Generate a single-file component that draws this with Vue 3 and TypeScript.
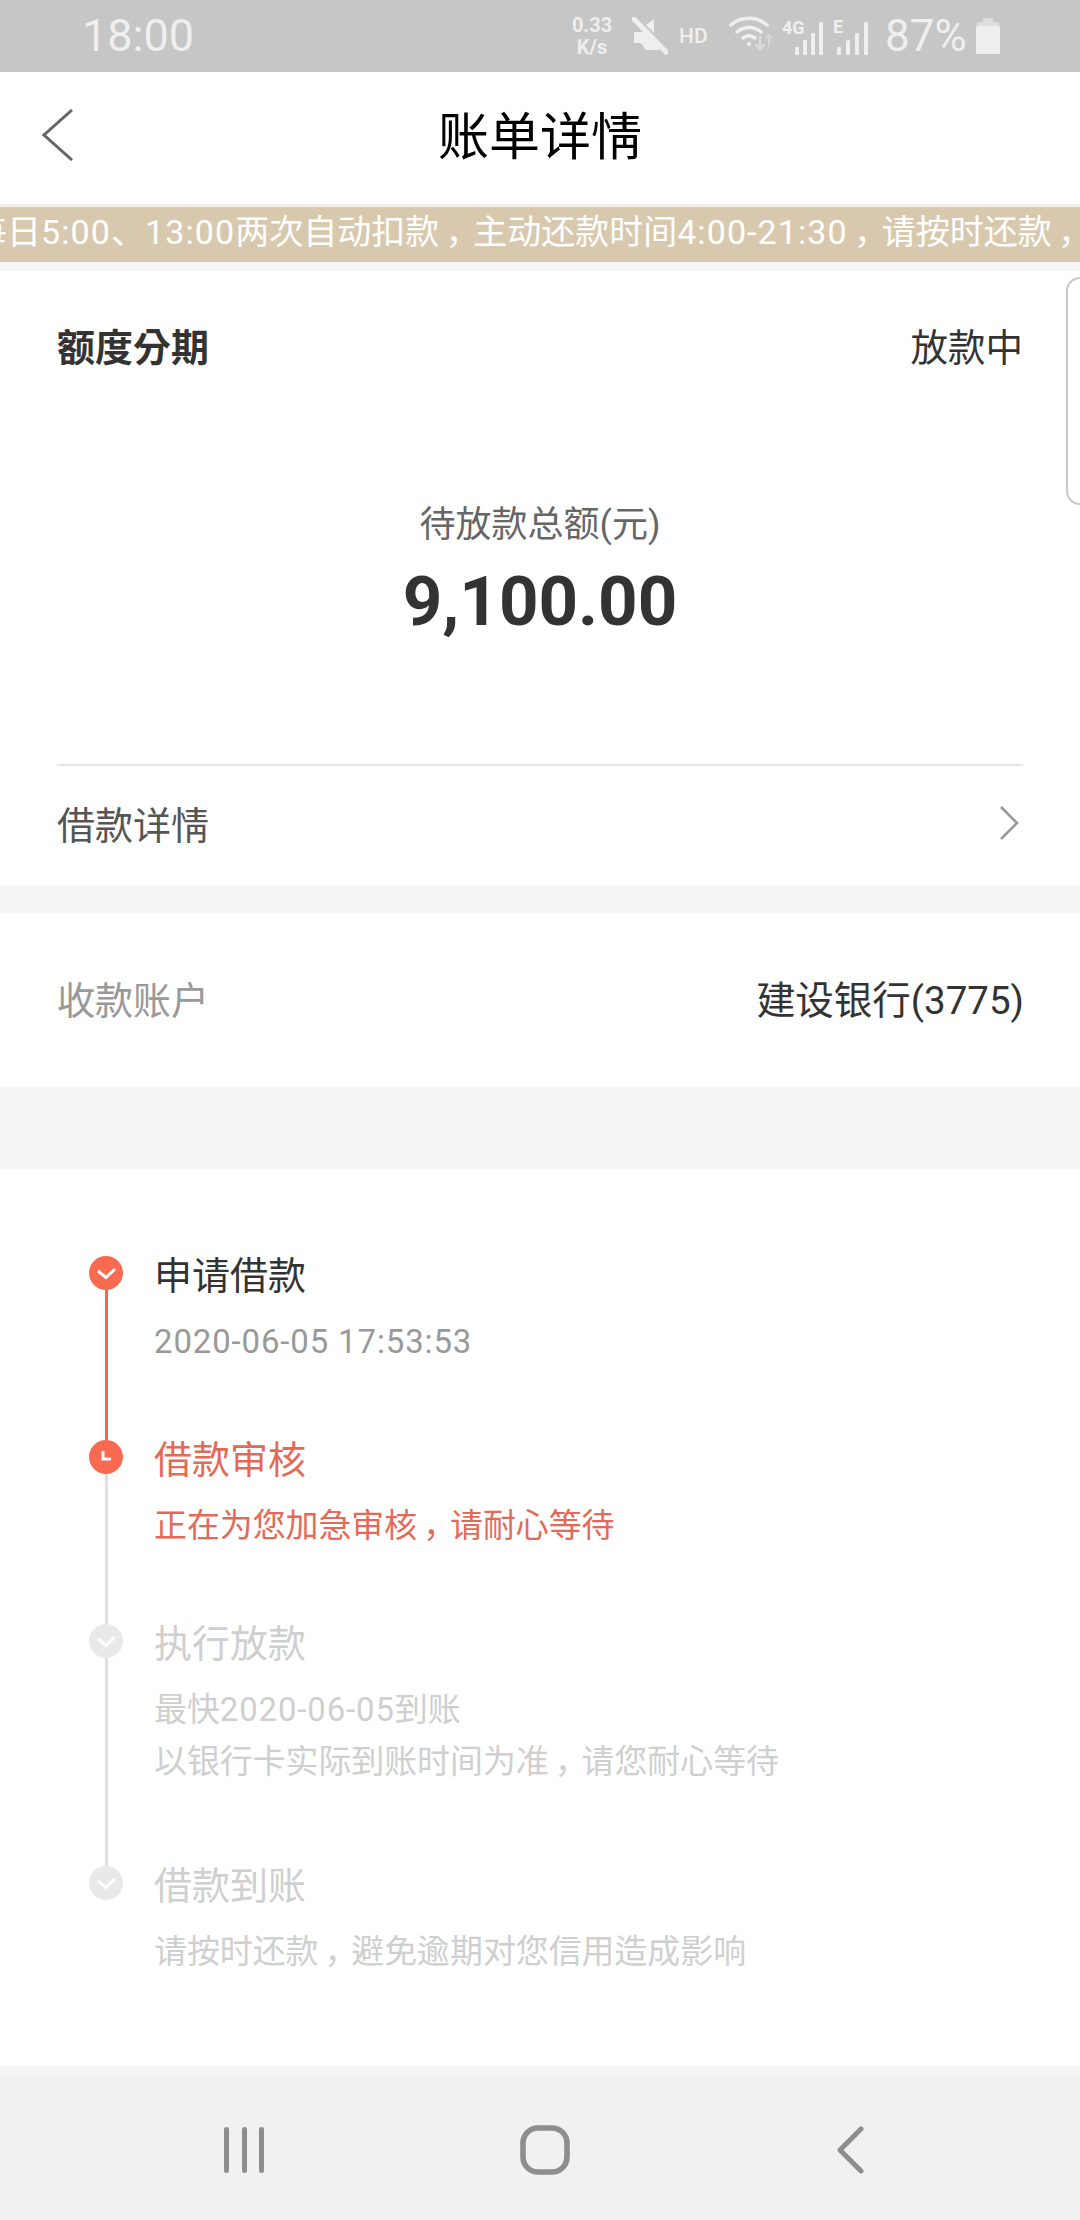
<script setup lang="ts">
interface Step {
  title: string;
  lines: string[];
  state: 'done' | 'current' | 'todo';
}
interface Segment {
  text: string;
  kind: 'num' | 'comma' | 'plain';
}
const C = '\uFF0C';
const notice = `每日5:00、13:00两次自动扣款${C}主动还款时间4:00-21:30${C}请按时还款${C}`;
const steps: Step[] = [
  { title: '申请借款', lines: ['2020-06-05 17:53:53'], state: 'done' },
  { title: '借款审核', lines: [`正在为您加急审核${C}请耐心等待`], state: 'current' },
  { title: '执行放款', lines: ['最快2020-06-05到账', `以银行卡实际到账时间为准${C}请您耐心等待`], state: 'todo' },
  { title: '借款到账', lines: [`请按时还款${C}避免逾期对您信用造成影响`], state: 'todo' },
];
const segments = (s: string): Segment[] =>
  s
    .split(/(\d[\d:\-\s]*\d|\uFF0C)/)
    .filter((t) => t.length > 0)
    .map((t) => ({
      text: t,
      kind: t === C ? 'comma' : /^\d/.test(t) ? 'num' : 'plain',
    }));
</script>

<template>
  <div class="page">
    <div class="status">
      <span class="time">18:00</span>
      <div class="status-right">
        <div class="speed"><span>0.33</span><span>K/s</span></div>
        <svg class="ic-mute" width="36" height="38" viewBox="0 0 36 38">
          <path d="M2 15h8l4-4 16 17-3 5H14l-5-7H2z" fill="#efefef" />
          <path d="M22 2v14l-8-8z" fill="#efefef" />
          <path d="M2 3l32 33" stroke="#c6c6c6" stroke-width="3" />
          <path d="M1 2l32 33" stroke="#efefef" stroke-width="5" stroke-linecap="round" transform="translate(1 0)" />
        </svg>
        <span class="hd">HD</span>
        <svg class="ic-wifi" width="44" height="38" viewBox="0 0 44 38" fill="none" stroke="#efefef" stroke-linecap="round">
          <path d="M2 10C12 1 28 1 38 10" stroke-width="3.5" />
          <path d="M8 17c7-6 17-6 24 0" stroke-width="3.5" />
          <path d="M14 23c4-3 8-3 12 0" stroke-width="3.5" />
          <circle cx="20" cy="29" r="2" fill="#efefef" stroke="none" />
          <path d="M31 22v12M27 30l4 4 4-4" stroke="#dcdcdc" stroke-width="2.5" />
          <path d="M40 31V20M37 23l3-3 3 3" stroke="#d6d6d6" stroke-width="2" />
        </svg>
        <div class="signal">
          <span class="net">4G</span>
          <svg width="34" height="34" viewBox="0 0 34 34" fill="#efefef">
            <rect x="0" y="26" width="4" height="8" rx="1" />
            <rect x="8" y="19" width="4" height="15" rx="1" />
            <rect x="16" y="12" width="4" height="22" rx="1" />
            <rect x="24" y="1" width="4" height="33" rx="1" />
          </svg>
        </div>
        <div class="signal signal-e">
          <span class="net">E</span>
          <svg width="34" height="34" viewBox="0 0 34 34" fill="#efefef">
            <rect x="1" y="26" width="4" height="8" rx="1" />
            <rect x="10" y="19" width="4" height="15" rx="1" />
            <rect x="19" y="12" width="4" height="22" rx="1" />
            <rect x="28" y="1" width="4" height="33" rx="1" />
          </svg>
        </div>
        <span class="pct">87%</span>
        <svg class="ic-batt" width="24" height="36" viewBox="0 0 24 36">
          <path d="M7 0h10v4H7z" fill="#dedede" />
          <path d="M1 4h22v4H1z" fill="#dedede" />
          <rect x="0" y="8" width="24" height="28" rx="1" fill="#efefef" />
        </svg>
      </div>
    </div>

    <header class="nav-top">
      <svg class="back" width="32" height="52" viewBox="0 0 32 52" fill="none">
        <path d="M30 1L2 26l28 25" stroke="#666" stroke-width="3" />
      </svg>
      <h1 class="title">账单详情</h1>
    </header>

    <div class="notice">
      <span class="notice-text"><span v-for="(g, k) in segments(notice)" :key="k" :class="g.kind">{{ g.text }}</span></span>
    </div>

    <section class="card summary">
      <div class="summary-head">
        <span class="kind">额度分期</span>
        <span class="state">放款中</span>
      </div>
      <div class="amount-block">
        <div class="amount-label">待放款总额(元)</div>
        <div class="amount">9,100.00</div>
      </div>
      <div class="detail-row">
        <span>借款详情</span>
        <svg width="22" height="36" viewBox="0 0 22 36" fill="none">
          <path d="M3 2l16 16L3 34" stroke="#999" stroke-width="2.6" />
        </svg>
      </div>
      <div class="side-tab"></div>
    </section>

    <section class="card account">
      <span class="account-label">收款账户</span>
      <span class="account-value">建设银行(3775)</span>
    </section>

    <section class="card timeline">
      <div v-for="(s, i) in steps" :key="s.title" class="step" :class="['step-' + s.state, 'step-n' + i]">
        <div class="rail">
          <div class="dot">
            <svg v-if="s.state !== 'current'" width="20" height="14" viewBox="0 0 20 14" fill="none">
              <path d="M2 5l8 6.5L19 3" stroke="#fff" stroke-width="3" />
            </svg>
            <svg v-else width="16" height="16" viewBox="0 0 16 16" fill="none">
              <path d="M5 2v8h8" stroke="#fff" stroke-width="3" />
            </svg>
          </div>
          <div v-if="i < steps.length - 1" class="line"></div>
        </div>
        <div class="step-body">
          <div class="step-title">{{ s.title }}</div>
          <div class="step-lines">
            <div v-for="l in s.lines" :key="l" class="step-line"><span v-for="(g, k) in segments(l)" :key="k" :class="g.kind">{{ g.text }}</span></div>
          </div>
        </div>
      </div>
    </section>

    <footer class="sysnav">
      <div class="sys-slot sys-recent">
        <svg width="42" height="48" viewBox="0 0 42 48" fill="#8e8e8e">
          <rect x="2" y="1" width="5" height="46" rx="2.5" />
          <rect x="20" y="1" width="5" height="46" rx="2.5" />
          <rect x="37" y="1" width="5" height="46" rx="2.5" />
        </svg>
      </div>
      <div class="sys-slot sys-home">
        <svg width="50" height="50" viewBox="0 0 50 50" fill="none">
          <rect x="3" y="3" width="44" height="44" rx="15" stroke="#8e8e8e" stroke-width="5.6" />
        </svg>
      </div>
      <div class="sys-slot sys-back">
        <svg width="28" height="48" viewBox="0 0 28 48" fill="none">
          <path d="M25 3L4 24l21 21" stroke="#8e8e8e" stroke-width="5" stroke-linecap="round" stroke-linejoin="round" />
        </svg>
      </div>
    </footer>
  </div>
</template>

<style>
html, body { margin: 0; padding: 0; background: #f5f5f5; }
</style>

<style scoped>
.page {
  width: 1080px;
  height: 2220px;
  overflow: hidden;
  display: flex;
  flex-direction: column;
  background: #f5f5f6;
  font-family: Roboto, "Noto Sans CJK KR", "Noto Sans CJK SC", sans-serif;
  color: #333;
}
.status {
  height: 72px;
  flex: none;
  background: #c6c6c6;
  color: #efefef;
  display: flex;
  align-items: center;
  justify-content: space-between;
  padding: 0 80px 0 82px;
}
.time { font-size: 45px; font-weight: 400; line-height: 74px; }
.status-right { display: flex; align-items: center; height: 72px; }
.speed {
  display: flex;
  flex-direction: column;
  align-items: center;
  font-size: 20px;
  font-weight: 700;
  line-height: 22px;
  width: 46px;
  color: #eee;
}
.ic-mute { margin-left: 17px; }
.hd { margin-left: 11px; font-size: 21px; font-weight: 500; width: 29px; }
.ic-wifi { margin-left: 21px; margin-top: -4px; }
.signal { position: relative; margin-left: 9px; width: 43px; height: 34px; margin-top: 4px; display: flex; justify-content: flex-end; }
.signal svg { margin-right: -4px; }
.net { position: absolute; left: 0; top: -3px; font-size: 18px; font-weight: 700; line-height: 20px; }
.signal-e { margin-left: 8px; width: 37px; }
.signal-e svg { margin-right: 0; }
.signal-e .net { top: -4px; }
.pct { margin-left: 15px; font-size: 44px; font-weight: 400; width: 81px; white-space: nowrap; line-height: 74px; }
.ic-batt { margin-left: 10px; }

.nav-top {
  height: 132px;
  flex: none;
  background: #fff;
  display: flex;
  align-items: center;
  justify-content: center;
  position: relative;
}
.back { position: absolute; left: 42px; top: 37px; }
.title { margin: 0; font-size: 51px; font-weight: 400; color: #000; line-height: 60px; }

.notice {
  height: 55px;
  flex: none;
  background: #d8c9ae;
  border-top: 3px solid #f0ece6;
  margin-bottom: 9px;
  overflow: hidden;
  white-space: nowrap;
}
.notice-text {
  display: inline-block;
  font-size: 34px;
  line-height: 50px;
  color: #fff;
  transform: translateX(-27px);
}
.notice-text .num { letter-spacing: 1.1px; }
.comma {
  display: inline-block;
  width: 1em;
  text-align: center;
  font-feature-settings: "palt";
}

.card { background: #fff; flex: none; }
.summary {
  height: 614px;
  box-sizing: border-box;
  padding: 0 57px;
  position: relative;
  display: flex;
  flex-direction: column;
  margin-bottom: 28px;
}
.summary-head {
  display: flex;
  justify-content: space-between;
  align-items: center;
  height: 44px;
  margin-top: 51px;
  font-size: 38px;
}
.state { font-size: 37.5px; }
.kind { font-weight: 700; }
.amount-block {
  height: 400px;
  box-sizing: border-box;
  border-bottom: 2px solid #e6e6e6;
  text-align: center;
  padding-top: 137px;
}
.amount-label { font-size: 36px; line-height: 44px; color: #666; }
.amount { font-size: 69px; font-weight: 700; line-height: 84px; margin-top: 13px; }
.detail-row {
  flex: 1;
  display: flex;
  align-items: center;
  justify-content: space-between;
  font-size: 38px;
  color: #555;
  padding-right: 3px;
  padding-bottom: 6px;
}
.side-tab {
  position: absolute;
  right: 0;
  top: 6px;
  width: 12px;
  height: 224px;
  border: 2px solid #c8c8c8;
  border-right: none;
  border-radius: 14px 0 0 14px;
  background: #fff;
}
.account {
  height: 174px;
  box-sizing: border-box;
  padding: 0 57px 6px;
  display: flex;
  align-items: center;
  justify-content: space-between;
  font-size: 38px;
  margin-bottom: 82px;
}
.account-label { color: #999; }
.account-value { font-size: 38.5px; margin-right: -1px; }

.timeline { flex: 1; padding: 87px 0 0 89px; box-sizing: border-box; min-height: 0; display: flex; flex-direction: column; }
.step { display: flex; }
.step-n0, .step-n1 { height: 184px; }
.step-n2 { height: 242px; }
.rail { width: 34px; display: flex; flex-direction: column; align-items: center; flex: none; }
.dot {
  width: 34px;
  height: 34px;
  border-radius: 50%;
  flex: none;
  display: flex;
  align-items: center;
  justify-content: center;
  background: #fa6a50;
}
.line { width: 3px; flex: 1; background: #e0e0e0; }
.step-n0 .line { background: #f0654f; }
.step-todo .dot { background: #e9e9e9; }
.step-body { margin-left: 31px; }
.step-title { font-size: 38px; line-height: 40px; color: #333; }
.step-lines { margin-top: 26px; font-size: 32.9px; line-height: 52px; color: #999; }
.step-line { white-space: nowrap; margin-top: -6px; }
.step-line + .step-line { margin-top: 0; }
.step-line .num { letter-spacing: 0.9px; }
.step-current .step-title, .step-current .step-lines { color: #e36a57; }
.step-todo .step-title, .step-todo .step-lines { color: #cfcfcf; }

.sysnav {
  height: 155px;
  flex: none;
  box-sizing: border-box;
  background: linear-gradient(#f7f7f9, #f1f1f1 15px);
  display: flex;
  align-items: center;
  padding-top: 14px;
}
.sys-slot { display: flex; }
.sys-recent { margin-left: 222px; }
.sys-home { margin-left: 256px; }
.sys-back { margin-left: 266px; }
</style>
